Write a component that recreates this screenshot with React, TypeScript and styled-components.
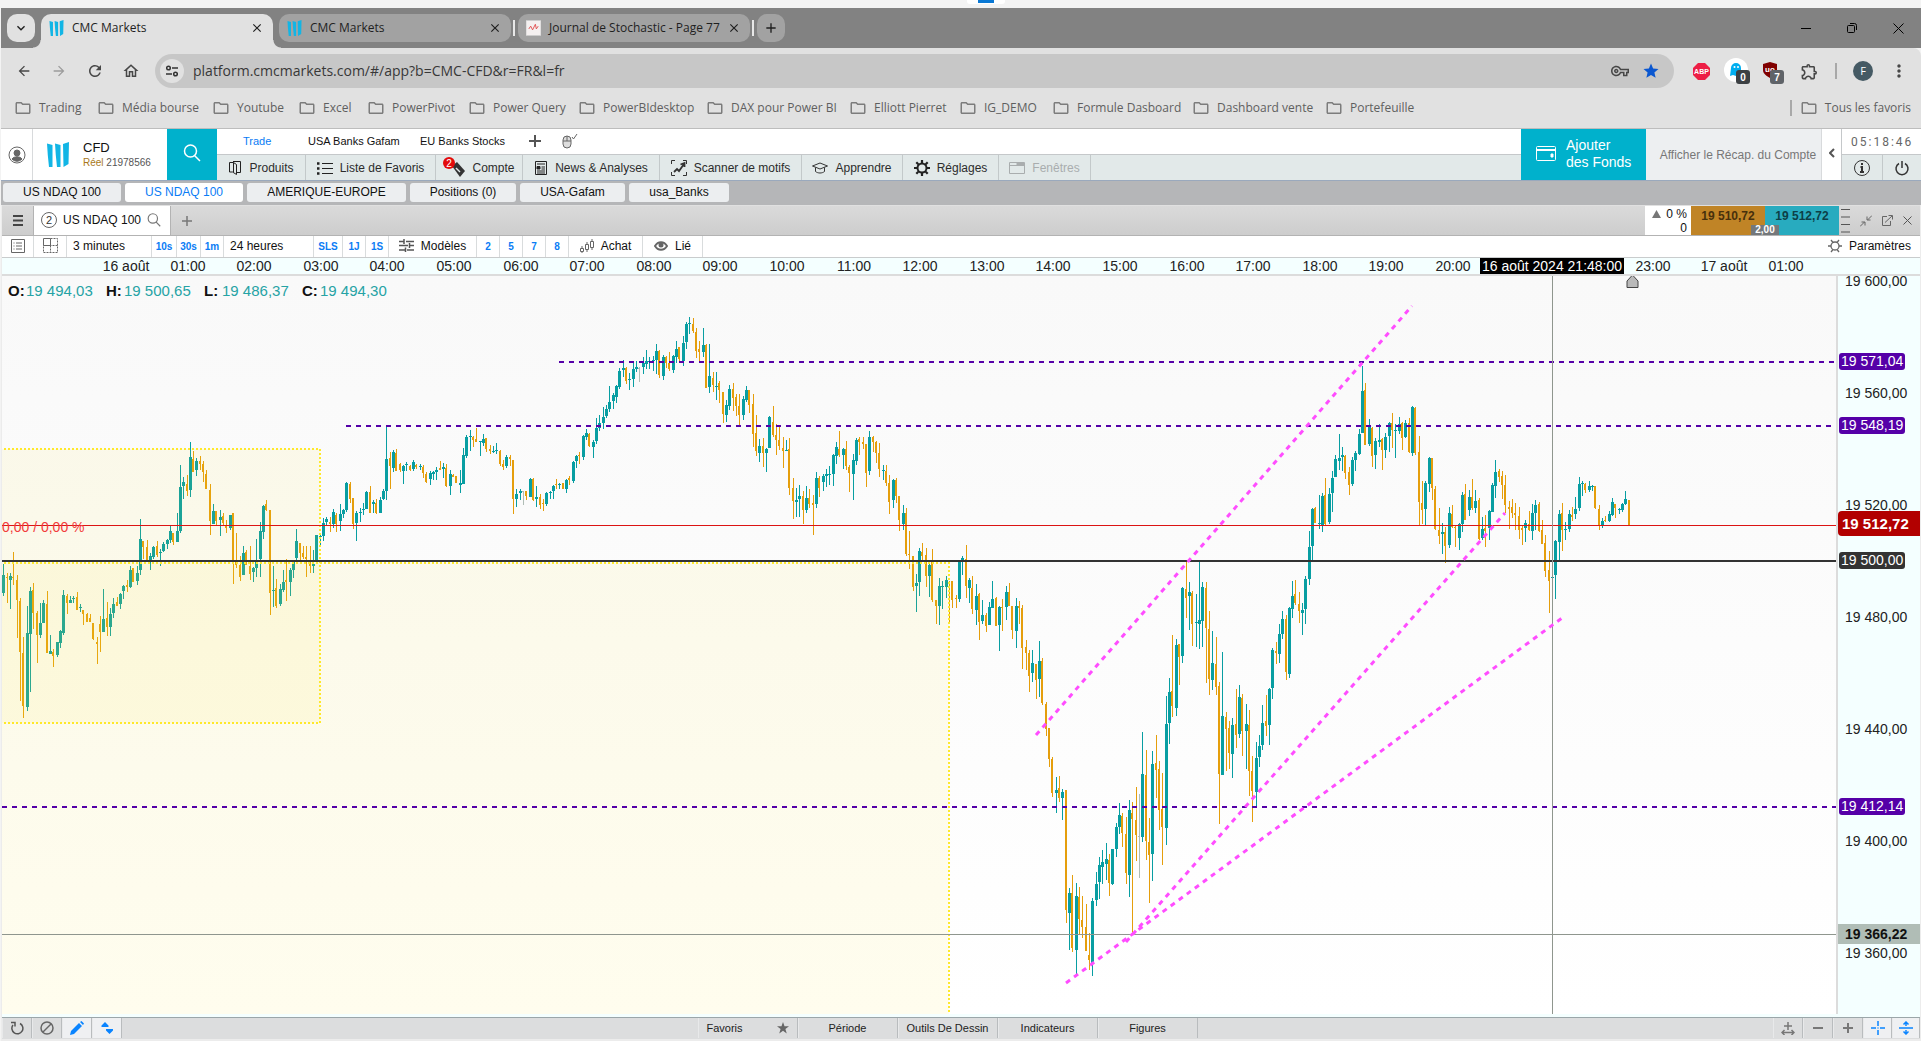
import React from "react";
import styled, { createGlobalStyle } from "styled-components";
import {
  MdArrowBack, MdArrowForward, MdRefresh, MdOutlineHome, MdStar, MdMoreVert,
  MdOutlineVpnKey, MdOutlineExtension, MdOutlineFolder, MdClose, MdAdd,
  MdKeyboardArrowDown,
} from "react-icons/md";

const UI = `"Liberation Sans", Arial, sans-serif`;
const CHROME = `"Open Sans", "Noto Sans", sans-serif`;
const TEAL = "#00b1cc";
const BLUE = "#0a7cf5";

const Global = createGlobalStyle`
  html, body { margin: 0; padding: 0; background: #f3f3f3; }
  *, *::before, *::after { box-sizing: border-box; }
  button, input { font: inherit; color: inherit; border: 0; margin: 0; padding: 0; background: none; }
  button { cursor: pointer; white-space: nowrap; }
  svg { display: block; flex: none; }
`;

const Page = styled.div`
  display: flex;
  flex-direction: column;
  height: 100vh;
  padding-left: 1px;
  font: 12px/16px ${UI};
  color: #222;
  overflow: hidden;
`;

/* ---------- browser frame ---------- */

const TopStrip = styled.div`
  flex: none;
  height: 8px;
  display: flex;
  justify-content: center;
  background: #f3f3f3;
`;
const Handle = styled.div`
  width: 38px;
  height: 4px;
  margin-left: 50px;
  padding: 0 11px;
  background: #fff;
  border-radius: 0 0 3px 3px;
`;
const HandleBar = styled.div`
  height: 3px;
  background: #0a78d4;
`;
const TabStrip = styled.header`
  flex: none;
  display: flex;
  align-items: flex-start;
  height: 40px;
  padding: 6px 0 0 6px;
  background: #828282;
  font: 12px/16px ${CHROME};
`;
const RoundButton = styled.button<{ $bg: string }>`
  display: grid;
  place-items: center;
  width: 28px;
  height: 28px;
  border-radius: 10px;
  background: ${(p) => p.$bg};
  color: #1f1f1f;
`;
const BrowserTab = styled.div<{ $active?: boolean }>`
  position: relative;
  display: flex;
  align-items: center;
  width: 232px;
  height: ${(p) => (p.$active ? 34 : 28)}px;
  margin-left: ${(p) => (p.$active ? 6 : 0)}px;
  padding: 0 9px 0 8px;
  padding-bottom: ${(p) => (p.$active ? 6 : 0)}px;
  border-radius: ${(p) => (p.$active ? "10px 10px 0 0" : "10px")};
  background: ${(p) => (p.$active ? "#e1e1e1" : "#a2a2a2")};
  color: #1f1f1f;
  &::before, &::after {
    content: "";
    display: ${(p) => (p.$active ? "block" : "none")};
    position: absolute;
    bottom: 0;
    width: 8px;
    height: 8px;
  }
  &::before { left: -8px; background: radial-gradient(circle at 0 0, transparent 7px, #e1e1e1 8px); }
  &::after { right: -8px; background: radial-gradient(circle at 100% 0, transparent 7px, #e1e1e1 8px); }
`;
const TabTitle = styled.span`
  flex: 1;
  min-width: 0;
  margin: 0 2px 0 8px;
  white-space: nowrap;
`;
const TabGap = styled.div<{ $line?: boolean }>`
  width: ${(p) => (p.$line ? 7 : 6)}px;
  height: 28px;
  padding: 6px 2px;
  &::before {
    content: "";
    display: ${(p) => (p.$line ? "block" : "none")};
    width: 2px;
    height: 16px;
    background: #e8e8e8;
  }
`;
const WindowControls = styled.div`
  display: flex;
  margin-left: auto;
`;
const WindowButton = styled.button`
  display: grid;
  place-items: center;
  width: 46px;
  height: 28px;
`;

const Toolbar = styled.div`
  flex: none;
  display: flex;
  align-items: center;
  height: 46px;
  padding: 0 4px 0 7px;
  background: #e1e1e1;
  color: #474747;
  border-top-right-radius: 8px;
`;
const NavButton = styled.button<{ $dim?: boolean; $w?: number }>`
  display: grid;
  place-items: center;
  width: ${(p) => p.$w ?? 36}px;
  height: 32px;
  color: ${(p) => (p.$dim ? "#9c9c9c" : "#474747")};
`;
const Omnibox = styled.label`
  flex: 1;
  display: flex;
  align-items: center;
  height: 34px;
  margin-left: 5px;
  padding: 0 14px 0 5px;
  border-radius: 17px;
  background: #c7c7c7;
  font: 14px/20px ${CHROME};
  input { flex: 1; min-width: 0; margin-left: 9px; color: #383838; outline: 0; }
`;
const SiteChip = styled.span`
  display: grid;
  place-items: center;
  width: 24px;
  height: 24px;
  border-radius: 12px;
  background: #e1e1e1;
`;
const Extensions = styled.div`
  display: flex;
  align-items: center;
  margin-left: 9px;
`;
const ToolSep = styled.span`
  width: 2px;
  height: 16px;
  margin: 0 8px;
  background: #a8a8a8;
`;
const Avatar = styled.span`
  display: grid;
  place-items: center;
  width: 20px;
  height: 20px;
  border-radius: 10px;
  background: #455a64;
  color: #fff;
  font: 11px/20px ${CHROME};
`;
const Bookmarks = styled.nav`
  flex: none;
  display: flex;
  align-items: center;
  height: 35px;
  padding: 0 10px 6px 13px;
  background: #e1e1e1;
  border-bottom: 1px solid #bdbdbd;
  font: 12px/16px ${CHROME};
`;
const Bookmark = styled.a<{ $w?: number }>`
  display: flex;
  align-items: center;
  gap: 7px;
  width: ${(p) => (p.$w ? `${p.$w}px` : "auto")};
  color: #5f5f5f;
  text-decoration: none;
  white-space: nowrap;
`;
const BookmarkEnd = styled.div`
  display: flex;
  align-items: center;
  margin-left: auto;
`;

/* ---------- trading platform ---------- */

const AppHeader = styled.header`
  flex: none;
  display: flex;
  height: 52px;
  background: #fff;
  border-bottom: 1px solid #9aa9bd;
`;
const ProfileButton = styled.button`
  display: grid;
  place-items: center;
  width: 32px;
  border-right: 1px solid #d8dadc;
`;
const Brand = styled.div`
  display: flex;
  align-items: center;
  gap: 14px;
  width: 134px;
  padding-left: 14px;
`;
const BrandText = styled.div`
  display: flex;
  flex-direction: column;
  font-size: 10px;
  line-height: 14px;
  color: #555;
  strong { font-size: 13px; line-height: 17px; font-weight: 400; color: #111; }
  em { font-style: normal; color: #a8781a; }
`;
const SearchButton = styled.button`
  display: grid;
  place-items: center;
  width: 50px;
  padding-bottom: 4px;
  background: ${TEAL};
`;
const Menus = styled.div`
  flex: 1;
  min-width: 0;
  display: flex;
  flex-direction: column;
`;
const Layouts = styled.nav`
  display: flex;
  align-items: center;
  height: 26px;
  padding: 0 0 2px 16px;
  border-bottom: 1px solid #c5c8ca;
  font-size: 11px;
`;
const LayoutLink = styled.button<{ $w: number; $on?: boolean }>`
  width: ${(p) => p.$w}px;
  padding-left: 10px;
  text-align: left;
  color: ${(p) => (p.$on ? BLUE : "#111")};
`;
const MainMenu = styled.nav`
  flex: 1;
  display: flex;
  background: #e2e9e9;
`;
const MenuItem = styled.button<{ $w: number; $off?: boolean }>`
  display: flex;
  align-items: center;
  justify-content: center;
  gap: 7px;
  width: ${(p) => p.$w}px;
  border-right: 1px solid #c3c9ca;
  color: ${(p) => (p.$off ? "#a9adae" : "#2c2c2c")};
`;
const FundsButton = styled.button`
  display: flex;
  align-items: center;
  gap: 10px;
  width: 125px;
  padding: 0 0 2px 15px;
  background: ${TEAL};
  color: #fff;
  font-size: 14px;
  line-height: 17px;
  text-align: left;
`;
const SummaryButton = styled.button`
  width: 176px;
  padding-left: 9px;
  background: #edeff1;
  color: #777;
  border-right: 1px solid #d8dadc;
`;
const Collapse = styled.button`
  display: grid;
  place-items: center;
  width: 19px;
  padding-bottom: 4px;
`;
const ClockBox = styled.div`
  display: grid;
  grid-template: 26px 1fr / 1fr 1fr;
  width: 80px;
  border-left: 1px solid #c5c8ca;
`;
const Clock = styled.time`
  grid-column: 1 / 3;
  padding: 5px 0 0 9px;
  border-bottom: 1px solid #c5c8ca;
  font-family: Roboto, ${UI};
  letter-spacing: 2px;
  color: #666;
`;
const ClockButton = styled.button`
  display: grid;
  place-items: center;
  background: #e2e9e9;
  & + & { border-left: 1px solid #c3c9ca; }
`;
const Workspaces = styled.nav`
  flex: none;
  display: flex;
  gap: 4px;
  height: 24px;
  padding: 2px 2px 3px;
  background: #b5b6b8;
`;
const Workspace = styled.button<{ $w: number; $on?: boolean }>`
  width: ${(p) => p.$w}px;
  padding-bottom: 1px;
  border-radius: 3px;
  background: ${(p) => (p.$on ? "#fff" : "#eceef0")};
  color: ${(p) => (p.$on ? BLUE : "#111")};
`;

const Panel = styled.main`
  flex: 1;
  min-height: 0;
  display: flex;
  flex-direction: column;
  padding: 0 1px 0 1px;
  background: #ececec;
`;
const PanelHead = styled.div`
  flex: none;
  display: flex;
  height: 31px;
  background: linear-gradient(#dadada, #cdcdcd);
  border-top: 1px solid #e0e0e0;
  border-bottom: 1px solid #b3b3b3;
`;
const HeadCell = styled.button<{ $w: number }>`
  display: grid;
  place-items: center;
  width: ${(p) => p.$w}px;
`;
const PanelTab = styled.div`
  display: flex;
  align-items: center;
  gap: 6px;
  width: 138px;
  padding: 0 0 2px 7px;
  background: #fff;
  border: solid #b3b3b3;
  border-width: 0 1px;
  color: #111;
`;
const Move = styled.div`
  width: 46px;
  margin-left: auto;
  padding: 1px 4px 0 0;
  background: #fff;
  color: #111;
  line-height: 14px;
  text-align: right;
  display: flex;
  flex-direction: column;
`;
const MoveRow = styled.span`
  display: flex;
  align-items: center;
  justify-content: flex-end;
  gap: 5px;
`;
const Quotes = styled.div`
  position: relative;
  display: flex;
`;
const Quote = styled.button<{ $bg: string; $fg: string }>`
  width: 74px;
  padding-bottom: 9px;
  background: ${(p) => p.$bg};
  color: ${(p) => p.$fg};
  font-weight: 700;
`;
const Spread = styled.span`
  position: absolute;
  left: 60px;
  bottom: 0;
  width: 28px;
  height: 10px;
  background: #74787b;
  color: #fff;
  font-size: 10px;
  line-height: 10px;
  font-weight: 700;
  text-align: center;
`;
const HeadIcons = styled.div`
  display: flex;
  align-items: center;
  gap: 10px;
  width: 81px;
  padding-left: 2px;
`;
const ChartTools = styled.div`
  flex: none;
  display: flex;
  height: 22px;
  background: #fff;
  border-bottom: 1px solid #c9cccd;
  color: #111;
`;
const Tool = styled.button<{ $w: number; $mini?: boolean; $start?: boolean }>`
  display: flex;
  align-items: center;
  justify-content: ${(p) => (p.$start ? "flex-start" : "center")};
  gap: 7px;
  width: ${(p) => p.$w}px;
  padding: ${(p) => (p.$mini ? "1px 0 0" : p.$start ? "0 0 2px 6px" : "0 0 2px")};
  border-right: 1px solid #d9dcdd;
  ${(p) => p.$mini && `color: ${BLUE}; font-size: 10px; font-weight: 700;`}
`;
const Settings = styled.button`
  display: flex;
  align-items: center;
  gap: 7px;
  margin-left: auto;
  padding: 0 9px 2px 0;
`;
const TimeAxis = styled.div`
  flex: none;
  position: relative;
  height: 18px;
  overflow: hidden;
  background: #f4ffff;
  border-bottom: 2px solid #dcdcdc;
  font-size: 14px;
  line-height: 17px;
  color: #222;
`;
const TimeLabel = styled.span`
  position: absolute;
  top: 0;
  width: 80px;
  margin-left: -40px;
  text-align: center;
`;
const TimeCursor = styled.span`
  position: absolute;
  top: 0;
  width: 144px;
  height: 16px;
  margin-left: -72px;
  background: #000;
  color: #fff;
  line-height: 16px;
  text-align: center;
  white-space: nowrap;
`;
const ChartRow = styled.div`
  flex: 1;
  min-height: 0;
  display: flex;
  background: #f4ffff;
  padding-bottom: 3px;
`;
const Plot = styled.div`
  flex: 1;
  min-width: 0;
  position: relative;
  overflow: hidden;
  background: linear-gradient(#f9f9f9, #fff);
`;
const Drawing = styled.svg`
  width: 100%;
  height: 100%;
  font: 14px ${UI};
`;
const Legend = styled.div`
  position: absolute;
  left: 6px;
  top: 5px;
  display: flex;
  font-size: 15px;
  line-height: 20px;
  color: #26a3a5;
`;
const LegendItem = styled.span`
  display: grid;
  grid-template-columns: 18px 80px;
  b { color: #111; }
`;
const PriceAxis = styled.div`
  position: relative;
  width: 84px;
  border-left: 2px solid #dcdcdc;
  font-size: 14px;
  line-height: 17px;
  color: #222;
`;
const PriceLabel = styled.span`
  position: absolute;
  left: 7px;
  margin-top: -8px;
`;
const PriceTag = styled(PriceLabel)<{ $bg: string }>`
  left: 1px;
  margin-top: -9px;
  padding: 0 2px;
  border-radius: 3px;
  background: ${(p) => p.$bg};
  color: #fff;
`;
const LastPrice = styled(PriceLabel)`
  left: 0;
  right: 0;
  margin-top: -14px;
  padding-left: 4px;
  border-radius: 4px 0 0 4px;
  background: #b20000;
  color: #fff;
  font-size: 15px;
  line-height: 25px;
  font-weight: 700;
`;
const CursorPrice = styled(PriceLabel)`
  left: 0;
  right: 0;
  margin-top: -12px;
  padding-left: 7px;
  background: #b0bdb6;
  color: #111;
  line-height: 20px;
  font-weight: 700;
`;
const Footer = styled.footer`
  flex: none;
  display: flex;
  justify-content: space-between;
  height: 24px;
  padding-bottom: 1px;
  background: #dcddde;
  border-top: 1px solid #9ba6a9;
  border-bottom: 2px solid #ececec;
  font-size: 11px;
`;
const FootGroup = styled.div`
  display: flex;
`;
const FootButton = styled.button<{ $w: number; $on?: boolean }>`
  display: flex;
  align-items: center;
  justify-content: center;
  width: ${(p) => p.$w}px;
  border-right: 1px solid #b9bcbe;
  border-left: 1px solid #e8e9ea;
  background: ${(p) => (p.$on ? "#eff0f2" : "transparent")};
  color: #222;
`;
const FavButton = styled(FootButton)`
  justify-content: space-between;
  padding: 0 8px;
`;

/* ---------- icons ---------- */

type IconProps = { w?: number; h?: number; box?: string; c?: string; sw?: number; fill?: string; children: React.ReactNode };
const Icon = ({ w = 16, h = 16, box, c = "#444", sw = 1, fill = "none", children }: IconProps) => (
  <svg width={w} height={h} viewBox={box ?? `0 0 ${w} ${h}`} fill={fill} stroke={c} strokeWidth={sw} aria-hidden="true">
    {children}
  </svg>
);

const Bars = ({ w, h }: { w: number; h: number }) => (
  <svg width={w} height={h} viewBox="0 0 22 25" fill="#12b5e5" aria-hidden="true">
    <path d="M0 1.500 5.500 3v22H2Q.5 12 0 1.500zM8 1.500 13.500 3v22H10Q8.500 12 8 1.500zM16 2 22 0l-.5 22-5 3z" />
  </svg>
);
const Lens = ({ s, c, sw = 1.5 }: { s: number; c: string; sw?: number }) => (
  <Icon w={s} h={s} box="0 0 18 18" c={c} sw={sw}><circle cx="7.500" cy="7" r="6" /><path d="m11.500 11.500 5.500 5.500" /></Icon>
);
const MiniStar = ({ c }: { c: string }) => (
  <svg width="12" height="12" viewBox="0 0 24 24" fill={c} aria-hidden="true">
    <path d="m12 0 3 8.500h9l-7.200 5.500L19.500 23 12 17.600 4.500 23l2.700-9L0 8.500h9z" />
  </svg>
);

const menu: { label: string; w: number; off?: boolean; icon: React.ReactNode }[] = [
  { label: "Produits", w: 89, icon: <Icon w={14} c="#222"><path d="M1.500 2.500h4l3 2v10l-4-2.500h-3zM5.500 2.500v9.500M5 1.500h7.500v11H9" /></Icon> },
  { label: "Liste de Favoris", w: 130, icon: <Icon c="#222"><path d="M5 3.500h11M5 8.500h11M5 13.500h11" /><path d="M0 3.500h2.500M0 8.500h2.500M0 13.500h2.500" strokeWidth="2.500" /></Icon> },
  {
    label: "Compte", w: 87, icon: (
      <Icon w={22} h={22} c="none">
        <path d="m9 9 5-4 8 9-5 6z" fill="#333" /><path d="m13 11 4 4" stroke="#e2e9e9" strokeWidth="1.500" />
        <circle cx="6" cy="6" r="6" fill="#e30b0b" />
        <text x="6" y="10" fontSize="10" fill="#fff" textAnchor="middle" fontFamily="Liberation Sans, sans-serif">2</text>
      </Icon>
    ),
  },
  { label: "News & Analyses", w: 137, icon: <Icon w={14} c="#222"><path d="M1.500 1.500h11v13h-11z" /><path d="M3 4h8M7.500 7H11M7.500 9H11M3 11h8M3 13h8" /><path d="M3 6.500h3V9H3z" fill="#222" /></Icon> },
  { label: "Scanner de motifs", w: 142, icon: <Icon c="#333"><path d="M.5 4V.5H4M12 .5h3.500V4M15.500 12v3.500H12M4 15.500H.5V12" /><path d="m3 12 3-3 2 2 5-7M9.500 4.500 13.500 3v4" strokeWidth="1.800" /></Icon> },
  { label: "Apprendre", w: 101, icon: <Icon c="#333"><path d="m.5 6 7.500-3L15.500 6 8 9zM3.500 7.500v4c2.500 2 6.500 2 9 0v-4" /></Icon> },
  { label: "Réglages", w: 96, icon: <Icon c="#222"><circle cx="8" cy="8" r="4.500" strokeWidth="2" /><path d="M8 0v3M8 13v3M0 8h3M13 8h3M2.300 2.300l2 2M11.700 11.700l2 2M2.300 13.700l2-2M11.700 4.300l2-2" strokeWidth="2.200" /></Icon> },
  { label: "Fenêtres", w: 92, off: true, icon: <Icon c="#a9adae"><path d="M.5 2.500h15v11H.5zM.5 5.500h15" /><path d="M8 3h7v2H8z" fill="#a9adae" /></Icon> },
];

const bookmarks: [string, number][] = [
  ["Trading", 83], ["Média bourse", 115], ["Youtube", 86], ["Excel", 69], ["PowerPivot", 101],
  ["Power Query", 110], ["PowerBIdesktop", 128], ["DAX pour Power BI", 143], ["Elliott Pierret", 110],
  ["IG_DEMO", 93], ["Formule Dasboard", 140], ["Dashboard vente", 133], ["Portefeuille", 90],
];

/* ---------- chart data ---------- */

// Each candle reads: kind + x, high, body top, body bottom, low, in thirds of a
// pixel from the origin of its session. g = up, o = down, n = unchanged.
const sessions: { x: number; y: number; rows: string }[] = [
  {
    x: 0, y: 420, rows: `g10 432 465 518 527|o22 459 470 474 549|g31 459 468 480 567|o40 396 471 474 495|o52 465 480 540 654|o61 534 543 696 843|o70 651 699 858 893|g82 558 639 861 873|g91 501 513 642 816|o100 489 510 579 627|o112 573 579 645 729|g121 549 609 645 654|g130 540 549 609 609|o142 513 552 699 699|g151 645 693 702 702|o160 687 696 708 741|g172 666 666 705 711|g181 630 633 669 684|g190 510 525 639 645|o202 522 528 549 582|g211 528 540 549 549|g220 528 534 537 549|o232 516 531 570 570|g241 552 561 564 576|o250 570 570 582 615|o262 579 582 606 606|o271 582 594 606 606|o280 609 609 657 660|o292 651 666 672 732|o301 588 612 636 696|g310 507 597 636 636|o322 546 594 621 648|g331 564 582 621 648|g340 534 552 579 594|o352 531 546 558 558|g361 519 522 552 567|g370 495 498 513 537|o382 480 495 501 516|g391 438 450 501 504|o400 444 444 486 486|g412 438 459 483 495|g421 297 357 450 465|o430 363 363 381 417|o442 360 381 423 423|g451 399 408 423 450|g460 378 381 411 417|o472 363 378 405 411|g481 387 396 399 438|g490 366 372 393 396|g502 357 360 372 387|g511 318 333 360 369|o520 339 339 366 375|g532 279 333 366 366|g541 135 201 333 339|g550 171 186 198 237|o562 165 192 213 228|g571 66 111 210 231|o580 93 117 156 156|g589 114 123 150 168|o601 108 123 132 150|o610 123 132 156 186|o619 150 162 207 207|o631 192 210 303 345|g640 252 273 312 312|o649 273 273 303 315|g661 270 291 300 348|o670 279 288 309 318|o679 300 315 324 339|g691 285 285 324 330|o700 279 279 420 492|o709 339 420 435 444|o721 408 435 471 483|g730 378 399 465 465|o739 390 396 435 435|o751 378 438 462 480|g760 441 444 456 486|g769 357 420 444 471|g781 306 333 417 471|g790 255 258 336 357|o799 240 252 270 273|o811 270 270 519 585|g820 438 510 513 561|o829 477 504 558 564|g841 492 507 552 558|g850 450 486 510 516|o859 417 480 486 543|g871 444 450 486 528|g880 420 423 450 474|g889 327 363 414 426|o901 369 369 399 426|o910 378 399 411 417|o919 378 411 417 471|o931 378 426 438 459|g940 390 432 438 459|g949 345 345 423 426|g961 342 348 351 381|g970 294 309 348 363|g979 291 297 306 318|o991 291 306 312 336|g1000 267 276 312 324|o1009 279 285 312 336|g1021 252 282 303 333|g1030 267 270 282 294|g1039 186 189 270 276|o1051 186 192 237 249|o1060 234 234 312 327|g1069 273 279 309 363|g1081 264 276 279 306|g1090 249 267 270 285|g1099 213 216 267 267|o1111 198 216 279 279|g1120 240 246 252 279|o1129 237 249 279 282|g1141 231 240 279 279|g1150 207 213 237 240|g1159 18 117 213 240|o1171 96 114 138 207|g1180 90 96 144 156|o1189 87 99 153 153|o1201 129 132 150 156|g1210 135 138 153 192|g1219 126 132 135 153|o1231 135 138 150 153|g1240 120 126 147 153|o1249 132 135 141 147|g1261 132 138 141 150|o1270 135 141 159 174|o1279 156 162 186 189|g1291 153 159 177 195|g1300 153 156 162 180|g1309 141 150 156 180|o1321 123 144 150 150|g1330 129 141 147 174|o1339 132 144 198 201|g1351 150 162 198 225|o1360 162 165 171 171|o1369 168 168 189 189|g1381 150 189 195 219|g1390 84 105 192 192|g1399 45 51 108 114|g1411 30 48 51 93|o1420 48 51 60 81|o1429 24 57 66 66`,
  },
  {
    x: 480, y: 300, rows: `g1 423 424 427 468|g10 402 417 429 438|o19 414 414 447 456|o31 435 447 453 462|g40 438 453 456 459|g49 429 450 453 462|o61 450 453 492 498|o70 480 492 501 510|g79 465 471 498 504|o91 465 471 477 498|o100 480 480 597 642|g109 567 582 597 621|g121 567 573 579 600|n130 573 573 576 615|o139 573 573 588 600|g151 534 537 591 591|o160 534 537 600 603|g169 558 591 597 621|o181 582 591 615 627|o190 597 609 612 633|g199 576 579 612 618|g211 573 576 579 597|g220 555 558 573 597|o229 537 552 555 567|g238 549 552 555 567|o250 549 549 567 567|g259 537 540 567 579|o268 528 534 540 555|g280 483 486 543 549|g289 465 468 483 504|o298 456 465 468 492|g310 405 408 471 480|g319 387 399 411 420|o328 399 402 438 441|g340 420 426 441 474|g349 354 384 423 432|g358 345 369 384 393|g370 321 351 369 387|g379 315 327 348 354|g388 258 306 327 336|g400 279 285 303 327|g409 255 258 291 309|g418 204 213 261 267|g430 180 204 210 231|o439 201 204 243 252|g448 219 237 240 270|g460 186 207 237 261|g469 183 201 207 216|n478 201 204 207 246|g490 171 189 201 222|g499 150 183 192 207|g508 171 183 186 207|g520 168 180 183 213|g529 132 153 180 222|o538 150 153 225 234|g550 165 171 228 240|o559 168 171 189 204|o568 156 189 207 213|g580 165 168 210 219|g589 123 147 171 189|o598 141 141 177 186|g610 108 129 183 198|g619 66 72 126 147|g628 51 69 72 102|o640 54 72 93 99|o649 84 96 153 174|o658 123 147 156 186|g670 84 135 156 171|o679 132 135 264 264|g688 132 228 261 279|o700 216 234 255 276|g709 216 258 261 300|o718 243 249 270 309|o730 276 276 342 369|g739 300 315 345 366|g748 255 267 318 330|o760 249 267 294 333|o769 282 291 318 348|o778 282 318 345 378|g790 288 297 345 360|g799 258 270 300 306|o808 270 270 315 339|o820 282 312 402 441|o829 345 399 453 468|g838 417 438 459 486|o850 414 438 459 501|g859 444 447 459 516|g868 348 351 444 444|o880 318 366 405 411|o889 372 405 420 465|o898 378 420 438 450|o910 411 444 453 504|g919 420 450 453 453|o928 414 447 564 585|o940 534 564 603 657|g949 564 600 606 651|g958 555 588 597 651|o970 573 588 630 672|g979 558 594 630 639|o988 567 594 612 624|o1000 585 609 615 705|g1009 516 534 612 624|o1018 528 534 564 591|g1030 522 528 546 573|g1039 507 522 528 561|g1048 498 522 525 555|g1060 462 465 522 558|g1069 426 441 468 492|o1078 393 447 465 471|g1090 444 447 465 507|o1099 423 447 498 510|o1108 495 501 519 576|g1120 462 480 522 600|g1129 414 420 483 495|o1138 411 417 426 465|o1150 411 426 432 447|o1159 432 432 519 561|g1168 393 411 513 525|o1180 408 411 426 456|o1189 423 426 459 489|o1198 429 459 507 531|g1210 495 510 513 540|o1219 495 513 549 558|o1228 525 549 606 642|g1240 537 540 600 624|o1249 534 540 588 609|o1258 588 588 660 693|g1270 615 639 672 690|o1279 624 639 762 768|o1288 693 762 765 807|o1300 768 768 861 873|g1309 822 849 858 936|g1318 744 753 846 888|o1327 729 756 768 783|o1339 744 765 828 861|g1348 783 795 828 891|o1357 747 786 900 906|o1369 900 900 918 972|g1378 834 858 918 975|g1387 843 858 861 927|g1399 828 840 861 894|o1408 843 846 849 969|o1417 843 843 900 924|o1429 885 894 897 924|g1438 783 783 897 906|g1447 768 774 780 825|o1459 735 777 858 894|g1468 834 840 864 909|o1477 828 864 927 942|g1489 852 888 930 975|o1498 879 882 966 1020`,
  },
  {
    x: 980, y: 560, rows: `g7 120 165 183 192|o19 159 165 198 216|g28 126 141 195 195|g37 63 117 144 144|o49 111 114 198 198|g58 138 141 195 273|o67 117 141 144 213|g79 78 96 141 180|o88 69 96 138 138|o97 138 138 210 237|g109 114 138 213 264|o118 123 138 144 192|o127 135 144 264 327|o139 240 261 279 330|o148 270 279 348 396|g157 270 309 339 366|o169 312 312 360 417|g178 243 303 357 411|o187 294 303 429 435|o199 426 432 507 528|o208 504 504 597 621|o217 591 597 699 711|g229 651 690 699 759|o238 648 684 714 726|g247 687 696 714 780|o259 690 690 1050 1089|g268 984 999 1059 1170|o277 945 999 1164 1176|g289 969 1008 1170 1242|o298 981 1011 1077 1122|o307 1008 1080 1101 1134|o319 1032 1101 1173 1173|o328 1119 1185 1200 1230|g337 1014 1023 1212 1248|g349 936 972 1020 1038|g358 891 915 966 1017|g367 870 906 921 972|g379 849 897 912 960|o388 882 900 969 1008|g397 867 867 972 975|g409 789 801 867 891|g418 729 765 801 822|o427 759 768 819 861|o439 771 822 939 972|g448 720 750 945 1011|o457 726 759 777 1122|o469 681 780 825 903|n478 702 828 831 954|g487 516 642 831 846|o499 570 645 843 900|o508 774 846 885 1029|g517 573 612 882 963|o529 525 609 630 714|o538 603 627 750 810|o547 639 747 801 915|g559 408 492 804 855|g568 354 396 489 552|o577 225 393 438 471|g589 237 255 444 468|o598 252 252 291 375|g607 81 84 288 309|o619 0 87 114 174|g628 66 96 108 210|o637 93 99 192 258|g649 102 186 189 261|g658 0 180 192 267|g667 66 81 183 261|o679 66 84 204 369|o688 153 207 357 405|g697 213 309 360 390|o709 231 312 381 405|o718 366 378 642 792|g727 276 468 645 645|o739 456 471 507 633|o748 483 504 579 627|g757 474 495 582 654|o769 387 492 525 564|g778 375 411 522 534|o787 402 414 513 588|g799 432 492 513 627|o808 450 495 633 708|o817 588 633 693 786|g829 546 594 696 741|g838 525 558 591 621|g847 435 489 555 570|o859 405 483 498 528|g868 384 387 495 555|g877 264 270 384 417|o889 246 273 279 312|g898 192 222 282 309|g907 153 177 222 237|o919 165 177 336 360|g928 141 144 342 354|g937 63 108 147 174|o946 60 102 129 135|o958 96 132 153 189|g967 129 150 159 225|g976 48 57 147 192`,
  },
  {
    x: 1280, y: 340, rows: `g88 573 621 717 735|g97 504 507 618 660|o106 501 504 549 549|g118 465 549 552 567|g127 459 468 555 576|o136 414 465 552 555|g148 444 462 546 552|g157 393 414 459 516|g166 345 357 411 411|g178 282 354 363 390|g187 321 345 351 393|o196 345 348 399 417|o208 381 396 435 465|g217 351 360 432 438|g226 333 339 360 393|g238 267 282 342 345|g247 78 153 279 279|o256 129 150 315 315|g268 237 258 312 318|o277 261 264 348 381|g286 294 303 345 387|g298 252 300 306 321|o307 294 297 330 390|g316 279 291 330 354|g328 246 249 288 336|o337 219 249 270 324|g346 252 270 273 354|g358 231 252 273 282|o367 246 249 294 330|g376 240 249 291 294|o388 234 249 336 339|g397 198 201 339 348|o406 201 204 339 345|o418 288 336 486 555|o427 423 489 510 552|g436 423 429 507 555|g448 351 354 432 456|o457 354 354 444 480|o466 438 447 567 570|o478 504 570 588 612|g487 549 576 582 642|o496 561 576 618 669|g508 501 519 615 624|o517 495 522 561 564|o526 558 561 564 621|g538 549 552 594 630|g547 456 465 552 576|o556 432 462 540 540|g568 450 471 510 528|o577 417 471 504 510|g586 450 483 504 519|o598 474 480 597 600|g607 531 567 594 600|o616 525 564 573 621|g628 510 513 564 600|g637 429 435 516 516|g646 360 396 438 474|o658 387 393 411 426|o667 393 408 435 477|o676 405 435 495 519|o688 483 501 507 567|o697 477 501 519 534|o706 489 519 525 570|o718 501 528 570 597|o727 555 564 570 615|g736 540 549 564 606|o748 513 552 570 573|g757 492 519 573 600|g766 480 495 519 570|o778 486 492 573 576|o787 540 570 612 612|o796 585 609 693 711|o808 633 690 723 819|g817 711 711 714 714|g826 600 603 705 777|g838 510 522 606 660|o847 489 519 570 633|g856 546 567 570 600|g868 510 522 567 576|o877 501 525 531 543|g886 471 507 522 537|g898 411 432 504 513|g907 423 429 432 468|o916 429 432 450 459|g928 423 438 450 456|g937 435 438 441 453|o946 438 438 504 507|o958 495 507 555 570|g967 534 543 555 564|o976 528 540 543 546|g988 513 522 543 546|g997 474 486 525 528|o1006 492 492 504 534|g1018 504 507 510 522|g1027 489 492 510 516|g1036 453 477 492 495|o1048 480 480 555 555`,
  },
];
const tint: Record<string, string> = { g: "#089ea2", o: "#e59e0c", n: "#b0bdb6" };
const candles = sessions.flatMap(({ x: ox, y: oy, rows }) =>
  rows.split("|").map((row) => {
    const [x, high, top, bottom, low] = row.slice(1).split(" ").map(Number);
    return {
      kind: row[0],
      x: ox + Math.floor(x / 3),
      high: oy + Math.round(high / 3),
      top: oy + Math.round(top / 3),
      bottom: oy + Math.round(bottom / 3),
      low: oy + Math.round(low / 3),
    };
  })
);

// The plot's own corner on the drawing grid.
const LEFT = 2;
const TOP = 276;
const priceY = (p: number) => Math.round(281 + (19600 - p) * 2.8) - TOP;
const hourX = (h: number) => Math.round(121 + h * 66.6) - LEFT;

const ticks = ["16 août", ...Array.from({ length: 20 }, (_, i) => `${String(i + 1).padStart(2, "0")}:00`), "", "", "23:00", "17 août", "01:00"];
const prices = ["19 600,00", "19 560,00", "19 520,00", "19 480,00", "19 440,00", "19 400,00", "19 360,00"];
const tags: [string, number, string][] = [
  ["19 571,04", 19571.04, "#5500a8"], ["19 548,19", 19548.19, "#5500a8"],
  ["19 500,00", 19500, "#333"], ["19 412,14", 19412.14, "#5500a8"],
];
const ohlc = [["O:", "19 494,03"], ["H:", "19 500,65"], ["L:", "19 486,37"], ["C:", "19 494,30"]];

const Chart = () => (
  <Drawing role="img" aria-label="US NDAQ 100, 3 minutes">
    <g transform={`translate(${-LEFT} ${-TOP})`}>
      <g shapeRendering="crispEdges">
        {candles.map((c, i) => (
          <g key={i} fill={tint[c.kind]}>
            <rect x={c.x} y={c.high} width={1} height={Math.max(1, c.low - c.high)} />
            <rect x={c.x - 1} y={c.top} width={c.kind === "g" ? 3 : 2} height={Math.max(1, c.bottom - c.top)} />
          </g>
        ))}
      </g>
      <g fill="#ffe92a" fillOpacity=".08" stroke="#ffe92a" strokeWidth="2" strokeDasharray="2 2">
        <rect x="-20" y="449" width="340" height="274" />
        <rect x="-20" y="563" width="969" height="700" />
      </g>
      <g shapeRendering="crispEdges" strokeWidth="2">
        <g stroke="#5500a8" strokeDasharray="5 5">
          <path d="M559 362H4000" />
          <path d="M346 426H4000" />
          <path d="M2 807H4000" />
        </g>
        <path d="M0 525.500H4000" stroke="#dc1414" strokeWidth="1" />
        <path d="M0 561H4000" stroke="#333" />
        <path d="M0 934.500H4000M1552.500 0V3000" stroke="#8f968e" strokeWidth="1" />
      </g>
      <g stroke="#ff4dff" strokeWidth="3" strokeDasharray="5 5">
        <path d="M1036 735 1412 306" />
        <path d="M1126 942 1505 513" />
        <path d="M1066 983 1562 618" />
      </g>
      <text x="2" y="532" fontSize="14" fill="#f23c3c">0,00 / 0,00 %</text>
      <path d="m1632.500 275 5.500 6v6.500h-11V281z" fill="#b9b9b9" stroke="#444" />
    </g>
  </Drawing>
);

export default function App() {
  return (
    <>
      <Global />
      <Page>
        <TopStrip><Handle><HandleBar /></Handle></TopStrip>
        <TabStrip>
          <RoundButton $bg="#e1e1e1" aria-label="Rechercher dans les onglets"><MdKeyboardArrowDown size={16} /></RoundButton>
          <BrowserTab $active><Bars w={15} h={16} /><TabTitle>CMC Markets</TabTitle><MdClose size={14} /></BrowserTab>
          <TabGap />
          <BrowserTab><Bars w={15} h={16} /><TabTitle>CMC Markets</TabTitle><MdClose size={14} /></BrowserTab>
          <TabGap $line />
          <BrowserTab>
            <Icon w={15} h={16} box="0 0 16 16" c="#e05050"><path d="M0 0h16v16H0z" fill="#f4f0f0" stroke="#ccc" /><path d="m3 9 2-3 2 4 3-6 1 5 2-3" /></Icon>
            <TabTitle>Journal de Stochastic - Page 77</TabTitle><MdClose size={14} />
          </BrowserTab>
          <TabGap $line />
          <RoundButton $bg="#a2a2a2" aria-label="Nouvel onglet"><MdAdd size={16} /></RoundButton>
          <WindowControls>
            <WindowButton aria-label="Réduire"><Icon w={10} h={10} c="#000"><path d="M0 5.500h10" /></Icon></WindowButton>
            <WindowButton aria-label="Restaurer"><Icon w={10} h={10} c="#000"><rect x=".5" y="2.500" width="7" height="7" rx="1" /><path d="M3 .5h4.500a2 2 0 0 1 2 2V7" /></Icon></WindowButton>
            <WindowButton aria-label="Fermer"><Icon w={11} h={11} c="#000"><path d="m.5.5 10 10M10.500.5l-10 10" /></Icon></WindowButton>
          </WindowControls>
        </TabStrip>
        <Toolbar>
          <NavButton $w={32} aria-label="Retour"><MdArrowBack size={16} /></NavButton>
          <NavButton $w={38} $dim aria-label="Avancer"><MdArrowForward size={16} /></NavButton>
          <NavButton $w={34} aria-label="Actualiser"><MdRefresh size={18} /></NavButton>
          <NavButton $w={38} aria-label="Accueil"><MdOutlineHome size={18} /></NavButton>
          <Omnibox>
            <SiteChip><Icon w={12} h={12} c="#333" sw={1.5}><circle cx="2.500" cy="3" r="1.800" /><path d="M6 3h6M0 9h6" /><circle cx="9.500" cy="9" r="1.800" /></Icon></SiteChip>
            <input aria-label="Adresse" defaultValue="platform.cmcmarkets.com/#/app?b=CMC-CFD&r=FR&l=fr" />
            <NavButton $w={44} aria-label="Mots de passe"><MdOutlineVpnKey size={18} /></NavButton>
            <MdStar size={18} color="#0b57d0" />
          </Omnibox>
          <Extensions>
            <NavButton aria-label="ABP">
              <Icon w={17} h={17} c="none"><path d="M5 0h7l5 5v7l-5 5H5l-5-5V5z" fill="#ed1e45" /><text x="8.500" y="11" fontSize="7" fontWeight="700" fill="#fff" textAnchor="middle" fontFamily="Liberation Sans, sans-serif">ABP</text></Icon>
            </NavButton>
            <NavButton aria-label="Ghostery">
              <Icon w={28} h={28} c="none"><circle cx="13" cy="13" r="12" fill="#fff" /><path d="M7 19 8 11a5 5 0 0 1 10 0v8l-3-1-2 1-3-1z" fill="#00aef0" /><circle cx="11.500" cy="10" r="1" fill="#fff" /><circle cx="15" cy="10" r="1" fill="#fff" /><rect x="13" y="13" width="14" height="14" rx="3" fill="#3c4043" /><text x="20" y="24" fontSize="10" fontWeight="700" fill="#fff" textAnchor="middle" fontFamily="Liberation Sans, sans-serif">0</text></Icon>
            </NavButton>
            <NavButton aria-label="uBlock">
              <Icon w={24} h={28} c="none"><path d="m9 5 7 2v6c0 4-4 6-7 8-3-2-7-4-7-8V7z" fill="#800000" /><text x="9" y="15" fontSize="8" fontWeight="700" fill="#fff" textAnchor="middle" fontFamily="Liberation Sans, sans-serif">uo</text><rect x="9" y="13" width="14" height="14" rx="3" fill="#5f6368" /><text x="16" y="24" fontSize="10" fontWeight="700" fill="#fff" textAnchor="middle" fontFamily="Liberation Sans, sans-serif">7</text></Icon>
            </NavButton>
            <NavButton aria-label="Extensions"><MdOutlineExtension size={19} /></NavButton>
            <ToolSep />
            <NavButton aria-label="Profil F"><Avatar>F</Avatar></NavButton>
            <NavButton aria-label="Menu"><MdMoreVert size={20} /></NavButton>
          </Extensions>
        </Toolbar>
        <Bookmarks aria-label="Favoris">
          {bookmarks.map(([label, w]) => (
            <Bookmark key={label} href="#" $w={w}><MdOutlineFolder size={18} color="#7c7c7c" />{label}</Bookmark>
          ))}
          <BookmarkEnd>
            <ToolSep />
            <Bookmark href="#"><MdOutlineFolder size={18} color="#7c7c7c" />Tous les favoris</Bookmark>
          </BookmarkEnd>
        </Bookmarks>

        <AppHeader>
          <ProfileButton aria-label="Profil">
            <Icon w={18} h={18} c="#666"><circle cx="9" cy="9" r="8" /><circle cx="9" cy="7" r="3" fill="#666" /><path d="M4 13c2-3 8-3 10 0-3 3-7 3-10 0z" fill="#666" /></Icon>
          </ProfileButton>
          <Brand>
            <Bars w={22} h={25} />
            <BrandText><strong>CFD</strong><span><em>Réel</em> 21978566</span></BrandText>
          </Brand>
          <SearchButton aria-label="Rechercher"><Lens s={18} c="#fff" /></SearchButton>
          <Menus>
            <Layouts>
              <LayoutLink $w={65} $on>Trade</LayoutLink>
              <LayoutLink $w={112}>USA Banks Gafam</LayoutLink>
              <LayoutLink $w={99}>EU Banks Stocks</LayoutLink>
              <HeadCell $w={52} aria-label="Ajouter une disposition"><Icon w={12} h={12} c="#555" sw={2}><path d="M6 0v12M0 6h12" /></Icon></HeadCell>
              <Icon w={17} c="#666"><rect x="2" y="3" width="8" height="12" rx="4" fill="#ddd" /><path d="M2 8h8M6 3v5M11 4l1.500 2L16 1" /></Icon>
            </Layouts>
            <MainMenu>
              {menu.map((m) => <MenuItem key={m.label} $w={m.w} $off={m.off} disabled={m.off}>{m.icon}{m.label}</MenuItem>)}
            </MainMenu>
          </Menus>
          <FundsButton>
            <Icon w={20} h={15} c="#fff"><rect x=".5" y=".5" width="19" height="14" rx="1" /><path d="M0 4h20" strokeWidth="2" /><path d="M15 8h2v3h-2z" fill="#fff" /></Icon>
            <span>Ajouter<br />des Fonds</span>
          </FundsButton>
          <SummaryButton>Afficher le Récap. du Compte</SummaryButton>
          <Collapse aria-label="Replier"><Icon w={6} h={10} c="#555" sw={2}><path d="M5 1 1 5l4 4" /></Icon></Collapse>
          <ClockBox>
            <Clock>05:18:46</Clock>
            <ClockButton aria-label="Informations"><Icon w={18} h={18} c="#333"><circle cx="9" cy="9" r="7.500" /><path d="M9 4v2M7.500 8H9v5M7 13h4" strokeWidth="2" /></Icon></ClockButton>
            <ClockButton aria-label="Déconnexion"><Icon w={16} h={16} c="#333" sw={1.5}><path d="M5 3.500a6 6 0 1 0 6 0M8 1v7" /></Icon></ClockButton>
          </ClockBox>
        </AppHeader>

        <Workspaces>
          <Workspace $w={118}>US NDAQ 100</Workspace>
          <Workspace $w={118} $on>US NDAQ 100</Workspace>
          <Workspace $w={159}>AMERIQUE-EUROPE</Workspace>
          <Workspace $w={106}>Positions (0)</Workspace>
          <Workspace $w={105}>USA-Gafam</Workspace>
          <Workspace $w={100}>usa_Banks</Workspace>
        </Workspaces>

        <Panel>
          <PanelHead>
            <HeadCell $w={31} aria-label="Menu"><Icon w={10} h={11} c="#444" sw={2}><path d="M0 1h10M0 5.500h10M0 10h10" /></Icon></HeadCell>
            <PanelTab>
              <Icon c="#666"><circle cx="8" cy="8" r="7.500" /><text x="8" y="12" fontSize="11" fill="#333" stroke="none" textAnchor="middle" fontFamily="Liberation Sans, sans-serif">2</text></Icon>
              US NDAQ 100
              <Lens s={14} c="#777" />
            </PanelTab>
            <HeadCell $w={31} aria-label="Ajouter"><Icon w={10} h={10} c="#777"><path d="M5 0v10M0 5h10" strokeWidth="1.500" /></Icon></HeadCell>
            <Move>
              <MoveRow><Icon w={9} h={8} c="none" fill="#777"><path d="m4.500 0 4.500 8H0z" /></Icon>0 %</MoveRow>
              <span>0</span>
            </Move>
            <Quotes>
              <Quote $bg="#c08426" $fg="#47300c">19 510,72</Quote>
              <Quote $bg="#28abbf" $fg="#0d3f47">19 512,72</Quote>
              <Spread>2,00</Spread>
            </Quotes>
            <HeadIcons>
              <Icon w={9} h={24} c="#555"><path d="M0 .5h9M0 8h9M0 15.500h9M0 23h9" /></Icon>
              <Icon w={12} h={12} c="#666"><path d="M0 11.500 4.500 7M1.500 7h3.500v3.500M12 .5 7.500 5M7 1.500V5h3.500" /></Icon>
              <Icon w={11} h={11} c="#666"><path d="M5 1.500H.5v9h8V6M3 7.500 10 1M6.500.5h4v4" /></Icon>
              <Icon w={9} h={9} c="#555"><path d="m.5.5 8 8M8.500.5l-8 8" /></Icon>
            </HeadIcons>
          </PanelHead>
          <ChartTools>
            <Tool $w={32} aria-label="Liste"><Icon w={14} h={14} c="#666"><path d="M.5.5h13v13H.5zM5 4h6M5 7h6M5 10h6M2.500 4h1M2.500 7h1M2.500 10h1" /></Icon></Tool>
            <Tool $w={33} aria-label="Grille"><Icon w={15} h={15} c="#666"><path d="M.5.5h7v7h-7z" /><path d="M7.500.5h7v14H.5v-7h14M7.500 7.500v7" strokeDasharray="2 1" /></Icon></Tool>
            <Tool $w={85} $start>3 minutes</Tool>
            <Tool $w={25} $mini>10s</Tool>
            <Tool $w={24} $mini>30s</Tool>
            <Tool $w={23} $mini>1m</Tool>
            <Tool $w={90} $start>24 heures</Tool>
            <Tool $w={29} $mini>SLS</Tool>
            <Tool $w={23} $mini>1J</Tool>
            <Tool $w={23} $mini>1S</Tool>
            <Tool $w={88}><Icon w={15} h={13} c="#555"><path d="M0 2.500h5M7 2.500h8M0 6.500h9M11 6.500h4M0 11h6M8 11h7M5 0v5M10.500 4v5M6.500 8.500V13" strokeWidth="1.500" /></Icon>Modèles</Tool>
            {["2", "5", "7", "8"].map((n) => <Tool key={n} $w={23} $mini>{n}</Tool>)}
            <Tool $w={74}><Icon w={14} h={14} c="#666"><path d="M.5 9.500h3v3h-3zM5.500 5.500h3v5h-3zM10.500 2.500h3v6h-3zM2 7v2.500M2 12v2M7 3v2.500M7 10.500V13M12 0v2.500M12 8.500V11" /></Icon>Achat</Tool>
            <Tool $w={60}><Icon w={14} h={10} c="#666" sw={2}><path d="M1 5c3-5 9-5 12 0-3 5-9 5-12 0z" /><circle cx="7" cy="4" r="1.500" fill="#666" /></Icon>Lié</Tool>
            <Settings><Icon w={14} h={14} c="#666" sw={1.3}><circle cx="7" cy="7" r="4" /><path d="M0 7h3M11 7h3M3 1l2 2.500M11 1 9 3.500M3 13l2-2.500M11 13l-2-2.500" /></Icon>Paramètres</Settings>
          </ChartTools>
          <TimeAxis>
            {ticks.map((t, h) => t && <TimeLabel key={h} style={{ left: hourX(h) + (t.includes("ao") ? 5 : 0) }}>{t}</TimeLabel>)}
            <TimeCursor style={{ left: 1552 - LEFT }}>16 août 2024 21:48:00</TimeCursor>
          </TimeAxis>
          <ChartRow>
            <Plot>
              <Chart />
              <Legend>{ohlc.map(([k, v]) => <LegendItem key={k}><b>{k}</b><span>{v}</span></LegendItem>)}</Legend>
            </Plot>
            <PriceAxis>
              {prices.map((p, i) => <PriceLabel key={p} style={{ top: priceY(19600 - i * 40) }}>{p}</PriceLabel>)}
              {tags.map(([label, p, bg]) => <PriceTag key={label} $bg={bg} style={{ top: priceY(p) }}>{label}</PriceTag>)}
              <LastPrice style={{ top: priceY(19512.72) }}>19 512,72</LastPrice>
              <CursorPrice style={{ top: priceY(19366.22) }}>19 366,22</CursorPrice>
            </PriceAxis>
          </ChartRow>
          <Footer>
            <FootGroup>
              <FootButton $w={30} aria-label="Réinitialiser"><Icon w={14} h={14} c="#555" sw={1.5}><path d="M3 4a5.500 5.500 0 1 0 7-1.500M1 1.500h4v4" /></Icon></FootButton>
              <FootButton $w={30} aria-label="Masquer"><Icon w={14} h={14} c="#666" sw={1.5}><circle cx="7" cy="7" r="6" /><path d="m3 11 8-8" /></Icon></FootButton>
              <FootButton $w={30} $on aria-label="Dessiner"><Icon w={14} h={14} c="none" fill="#0a84ff"><path d="m0 14 1-4 8-8 3 3-8 8zM10 1l1.500-1L14 2.500 13 4z" /></Icon></FootButton>
              <FootButton $w={30} $on aria-label="Échelle"><Icon w={12} h={12} c="none" fill="#0a84ff"><path d="m4 0 3.500 3.500V5h-7V3.500zM8.500 12 5 8.500V7h7v1.500z" /></Icon></FootButton>
            </FootGroup>
            <FootGroup>
              <FavButton $w={100}>Favoris<MiniStar c="#666" /></FavButton>
              <FootButton $w={100}>Période</FootButton>
              <FootButton $w={100}>Outils De Dessin</FootButton>
              <FootButton $w={100}>Indicateurs</FootButton>
              <FootButton $w={100}>Figures</FootButton>
            </FootGroup>
            <FootGroup>
              <FootButton $w={30} aria-label="Étirer"><Icon w={14} h={13} c="#777" sw={1.5}><path d="M7 0v8M3 4h8M1 10.500h12M3.500 8 1 10.500 3.500 13M10.500 8l2.500 2.500L10.500 13" /></Icon></FootButton>
              <FootButton $w={30} aria-label="Zoom arrière"><Icon w={10} h={10} c="#777" sw={2}><path d="M0 5h10" /></Icon></FootButton>
              <FootButton $w={30} aria-label="Zoom avant"><Icon w={10} h={10} c="#777" sw={2}><path d="M0 5h10M5 0v10" /></Icon></FootButton>
              <FootButton $w={29} $on aria-label="Croix"><Icon w={14} h={14} c="#0a84ff"><path d="M7 0v5M7 9v5M0 7h5M9 7h5M6.500 7h1" strokeWidth="1.500" /></Icon></FootButton>
              <FootButton $w={28} $on aria-label="Ajuster"><Icon w={14} h={14} c="#0a84ff" sw={1.5}><path d="M0 7h14M7 1v4M7 9v4M4.500 3.500 7 1l2.500 2.500M4.500 10.500 7 13l2.500-2.500" /></Icon></FootButton>
            </FootGroup>
          </Footer>
        </Panel>
      </Page>
    </>
  );
}
